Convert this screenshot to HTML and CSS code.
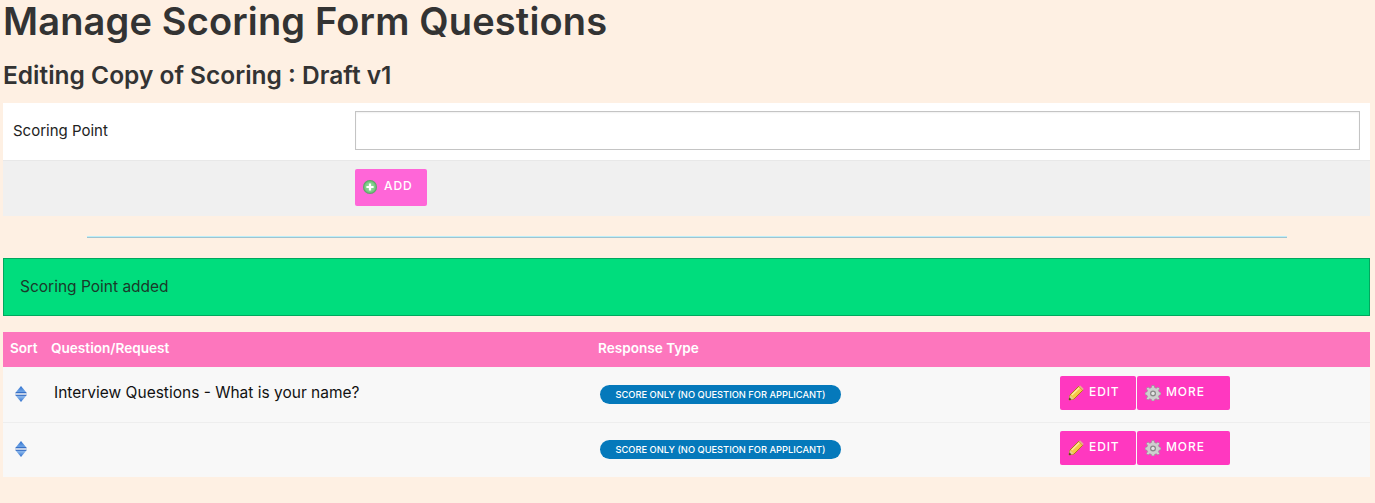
FILE: index.html
```html
<!DOCTYPE html>
<html lang="en">
<head>
<meta charset="utf-8">
<title>Manage Scoring Form Questions</title>
<link rel="stylesheet" href="styles.css">
</head>
<body>
<svg class="defs" width="0" height="0" aria-hidden="true">
  <defs>
    <linearGradient id="gu" x1="0" y1="0" x2="0" y2="1"><stop offset="0" stop-color="#2a6ccc"/><stop offset=".75" stop-color="#6ea4e6"/><stop offset="1" stop-color="#1450b4"/></linearGradient>
    <linearGradient id="gd" x1="0" y1="0" x2="0" y2="1"><stop offset="0" stop-color="#1450b4"/><stop offset=".25" stop-color="#8cb8ec"/><stop offset="1" stop-color="#2a6ccc"/></linearGradient>
    <symbol id="sort" viewBox="0 0 12 16"><path d="M6 0 12 7.2H0Z" fill="url(#gu)"/><path d="M0 8.8H12L6 16Z" fill="url(#gd)"/></symbol>
    <symbol id="pencil" viewBox="0 0 16 16"><path d="M1 15 2 10 10.8 1.2 14.8 5.2 6 14Z" fill="#f6c945" stroke="#b07a1c" stroke-width="1"/><path d="M3.8 10 11.2 2.8" stroke="#fdeaa0" stroke-width="1.5"/><path d="M10.8 1.2 12.2.4 15.6 3.8 14.8 5.2Z" fill="#e8b090"/><path d="M1 15 2 10 6 14Z" fill="#e8c890"/><path d="M1 15 1.5 12.6 3.4 14.5Z" fill="#3a2410"/></symbol>
    <symbol id="gear" viewBox="0 0 16 16"><path d="M6.8.5H9.2L9.6 2.6 11.2 3.3 13 2 14.7 3.7 13.4 5.4 14.1 7 15.9 7.4V9.8L14.1 10.2 13.4 11.8 14.7 13.4 13 15 11.2 13.8 9.6 14.4 9.2 15.9H6.8L6.4 14.4 4.8 13.8 3 15 1.3 13.4 2.6 11.8 1.9 10.2.1 9.8V7.4L1.9 7 2.6 5.4 1.3 3.7 3 2 4.8 3.3 6.4 2.6Z" fill="#cfcfcf" stroke="#909090" stroke-width=".6"/><circle cx="8" cy="8.4" r="3" fill="#8a8a8a"/><circle cx="8" cy="8.4" r="1.7" fill="#e6e6e6"/></symbol>
    <radialGradient id="ga"><stop offset="0" stop-color="#9ce0a6"/><stop offset=".7" stop-color="#7ccb86"/><stop offset="1" stop-color="#4f9c5c"/></radialGradient>
  </defs>
</svg>
<main class="page">
  <h1 class="title">Manage Scoring Form Questions</h1>
  <h2 class="subtitle">Editing Copy of Scoring : Draft v1</h2>
  <form class="form">
    <div class="form-row">
      <label class="form-label" for="point">Scoring Point</label>
      <input class="form-input" id="point" type="text">
    </div>
    <div class="form-actions">
      <button class="btn btn-add" type="button">
        <svg class="icon-add" viewBox="0 0 14 14" aria-hidden="true"><circle cx="7" cy="7" r="7" fill="url(#ga)"/><path d="M7 3.4V10.6M3.4 7H10.6" stroke="#fff" stroke-width="2.2"/></svg>
        ADD
      </button>
    </div>
  </form>
  <hr class="divider">
  <div class="notice">Scoring Point added</div>
  <div class="table">
    <div class="row head">
      <div class="c-sort">Sort</div>
      <div class="c-question">Question/Request</div>
      <div class="c-type">Response Type</div>
    </div>
    <div class="row item">
      <div class="c-sort"><svg class="icon-sort"><use href="#sort"/></svg></div>
      <div class="c-question">Interview Questions - What is your name?</div>
      <div class="c-type"><span class="badge">SCORE ONLY (NO QUESTION FOR APPLICANT)</span></div>
      <div class="c-actions">
        <a class="btn btn-edit"><svg class="icon-btn"><use href="#pencil"/></svg>EDIT</a>
        <a class="btn btn-more"><svg class="icon-btn"><use href="#gear"/></svg>MORE</a>
      </div>
    </div>
    <div class="row item">
      <div class="c-sort"><svg class="icon-sort"><use href="#sort"/></svg></div>
      <div class="c-question"></div>
      <div class="c-type"><span class="badge">SCORE ONLY (NO QUESTION FOR APPLICANT)</span></div>
      <div class="c-actions">
        <a class="btn btn-edit"><svg class="icon-btn"><use href="#pencil"/></svg>EDIT</a>
        <a class="btn btn-more"><svg class="icon-btn"><use href="#gear"/></svg>MORE</a>
      </div>
    </div>
  </div>
</main>
</body>
</html>
```
FILE: styles.css
```css
* { box-sizing: border-box; }
html, body { margin: 0; }
body {
  background: #fef0e3;
  color: #111;
  font-family: "Inter", "Liberation Sans", sans-serif;
  height: 503px;
  overflow: hidden;
}
.defs { display: block; height: 0; }
.page { padding: 0 5px 0 3px; }
.title {
  margin: 0;
  font-size: 38px;
  line-height: 42px;
  font-weight: 600;
  color: #333;
  letter-spacing: .15px;
}
.subtitle {
  margin: 19px 0 0;
  font-size: 24.5px;
  line-height: 28px;
  font-weight: 600;
  color: #333;
}
.form { margin-top: 14px; }
.form-row {
  display: flex;
  align-items: center;
  height: 58px;
  background: #fff;
  border-bottom: 1px solid #e8e8e8;
  padding: 0 10px;
}
.form-label { width: 342px; padding-bottom: 3px; font-size: 15px; color: #222; }
.form-input {
  flex: 1;
  height: 39px;
  margin-top: -2px;
  border: 1px solid #c4c4c4;
  background: #fff;
  box-shadow: inset 0 1px 2px rgba(0,0,0,.06);
}
.form-actions {
  height: 55px;
  background: #f0f0f0;
  padding: 8px 0 0 352px;
}
.btn {
  display: inline-flex;
  align-items: center;
  border: 0;
  border-radius: 2px;
  color: #fff;
  font-family: inherit;
  font-size: 12px;
  font-weight: 500;
  letter-spacing: .9px;
}
.btn-add {
  width: 72px;
  height: 37px;
  padding: 0 0 4px 8px;
  background: #ff66d8;
}
.icon-add { width: 14px; height: 14px; margin-right: 7px; margin-top: 2px; }
.divider {
  width: 1200px;
  height: 2px;
  margin: 20px 0 20px 84px;
  border: 0;
  border-top: 1px solid #bdeef8;
  background: #9fc4d0;
}
.notice {
  height: 58px;
  padding: 0 16px 2px;
  display: flex;
  align-items: center;
  background: #00dd7d;
  border: 1px solid #00a85e;
  font-size: 15.5px;
  color: #1a3a2a;
}
.table { margin-top: 16px; }
.row {
  display: grid;
  grid-template-columns: 44px 544px 463px 1fr;
  align-items: center;
}
.head {
  height: 35px;
  padding-bottom: 3px;
  background: #fd76bd;
  color: #fff;
  font-size: 13.6px;
  font-weight: 600;
}
.head .c-sort { padding-left: 7px; }
.head .c-question { padding-left: 4px; }
.head .c-type { padding-left: 7px; }
.item {
  height: 56px;
  background: #f8f8f8;
  border-bottom: 1px solid #eee;
}
.item:last-child { border-bottom: 0; height: 54px; padding-bottom: 1px; }
.item .c-sort { padding: 0 0 1px 12px; line-height: 0; }
.icon-sort { width: 12px; height: 16px; }
.item .c-question { padding: 0 0 4px 7px; font-size: 15.5px; font-weight: 400; }
.item .c-type { padding-left: 9px; line-height: 0; }
.badge {
  display: inline-block;
  width: 241px;
  height: 19px;
  line-height: 19px;
  border-radius: 10px;
  background: #0579bb;
  color: #fff;
  font-size: 9.3px;
  font-weight: 500;
  text-align: center;
  white-space: nowrap;
}
.c-actions { display: flex; gap: 1px; padding-left: 6px; padding-bottom: 3px; }
.btn-edit, .btn-more {
  height: 34px;
  background: #ff38c0;
  padding: 0 0 3px 8px;
}
.btn-edit { width: 76px; }
.btn-more { width: 93px; }
.icon-btn { width: 16px; height: 16px; margin-right: 5px; margin-top: 3px; }
```
